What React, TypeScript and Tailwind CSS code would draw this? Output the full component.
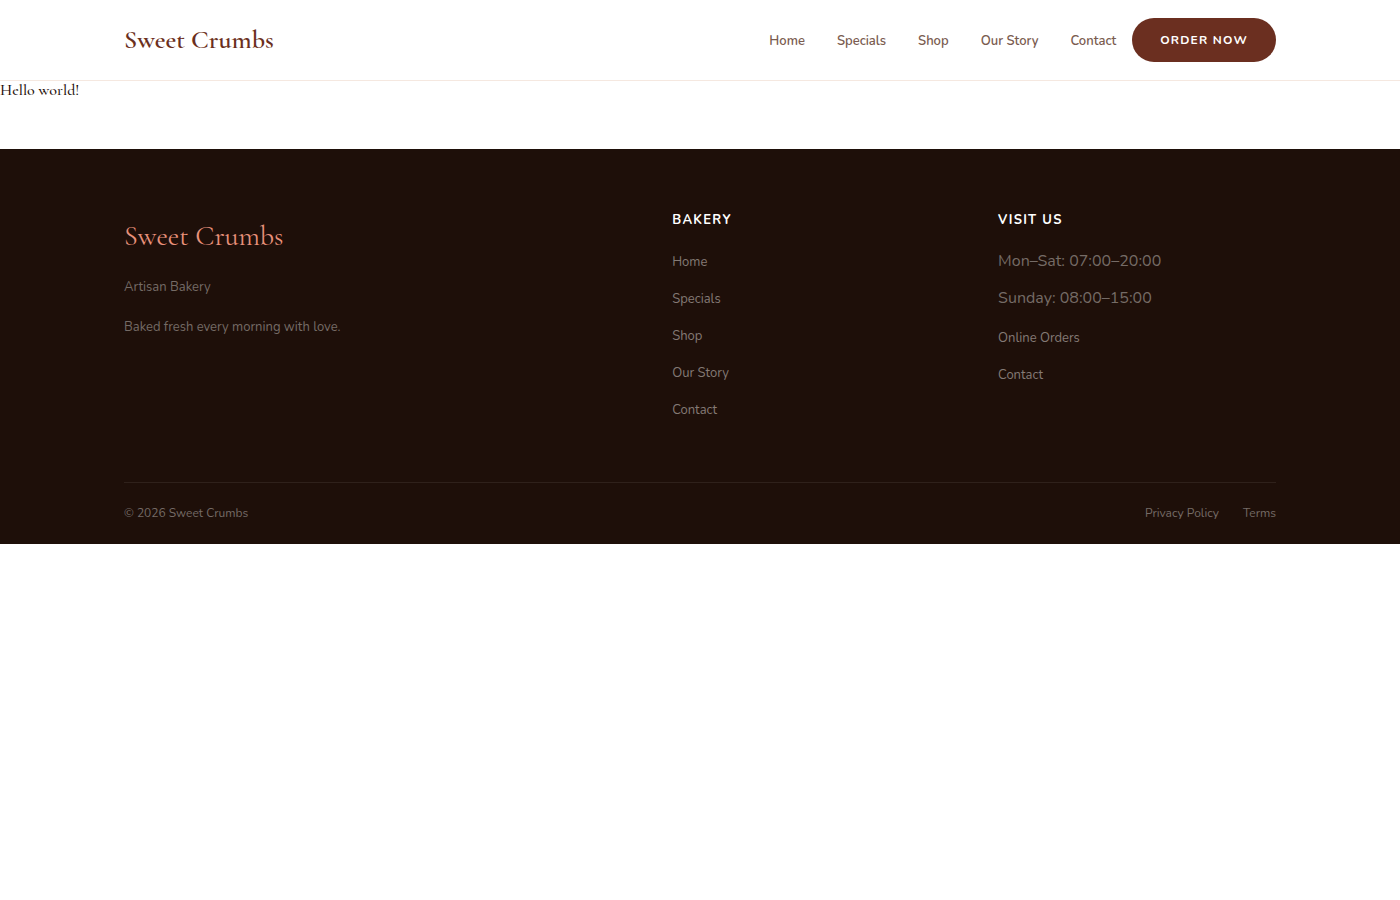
const navLinks = ['Home', 'Specials', 'Shop', 'Our Story', 'Contact'];
const hours = ['Mon–Sat: 07:00–20:00', 'Sunday: 08:00–15:00'];
const visitLinks = ['Online Orders', 'Contact'];

function FooterLinks({ links }: { links: string[] }) {
  return (
    <ul className="flex flex-col gap-3">
      {links.map((label) => (
        <li key={label} className="text-base leading-6">
          <a href="#" className="text-[13px] text-[#847a75] hover:text-white">{label}</a>
        </li>
      ))}
    </ul>
  );
}

export default function App() {
  return (
    <div className="bg-white font-['Nunito','Lato',sans-serif]">
      <header className="border-b border-[#f5e8e0]">
        <div className="mx-auto flex h-20 max-w-[1200px] items-center justify-between px-6">
          <a href="#" className="font-['Cormorant_Garamond','Liberation_Serif',serif] text-[26px] leading-10 font-semibold text-[#6b2f20]">
            Sweet Crumbs
          </a>
          <div className="flex items-center gap-4">
            <nav>
              <ul className="flex items-center gap-8">
                {navLinks.map((label) => (
                  <li key={label} className="text-base leading-6">
                    <a href="#" className="text-[13px] font-semibold text-[#7a5c50] hover:text-[#6b2f20]">
                      {label}
                    </a>
                  </li>
                ))}
              </ul>
            </nav>
            <button className="h-11 rounded-full bg-[#6b2f20] px-7 text-xs font-bold tracking-widest text-white uppercase">
              Order Now
            </button>
          </div>
        </div>
      </header>

      <main className="pb-[50px] font-['Cormorant_Garamond','Liberation_Serif',serif] text-base leading-[18px] font-medium text-[#1e0f09]">
        Hello world!
      </main>

      <footer className="bg-[#1e0f09] pt-[60px] pb-5 text-[#756b66]">
        <div className="mx-auto max-w-[1200px] px-6">
          <div className="grid grid-cols-[1.8fr_1fr_1fr] gap-12 pb-[60px]">
            <div>
              <div className="mb-3 font-['Cormorant_Garamond','Liberation_Serif',serif] text-[28px] leading-[54px] text-[#e8917a]">
                Sweet Crumbs
              </div>
              <div className="flex flex-col gap-4 text-[13px] leading-6">
                <p>Artisan Bakery</p>
                <p>Baked fresh every morning with love.</p>
              </div>
            </div>

            <div>
              <h4 className="mb-[18px] text-[13px] leading-[22px] font-bold tracking-widest text-white uppercase">Bakery</h4>
              <FooterLinks links={navLinks} />
            </div>

            <div>
              <h4 className="mb-[18px] text-[13px] leading-[22px] font-bold tracking-widest text-white uppercase">Visit Us</h4>
              <div className="flex flex-col gap-[14px]">
                <ul className="flex flex-col gap-3 text-base leading-[25px]">
                  {hours.map((line) => (
                    <li key={line}>{line}</li>
                  ))}
                </ul>
                <FooterLinks links={visitLinks} />
              </div>
            </div>
          </div>

          <div className="flex items-center justify-between border-t border-[#2f211b] pt-5 text-xs leading-[21px]">
            <span>© 2026 Sweet Crumbs</span>
            <div className="flex gap-6">
              <a href="#" className="hover:text-white">Privacy Policy</a>
              <a href="#" className="hover:text-white">Terms</a>
            </div>
          </div>
        </div>
      </footer>
    </div>
  );
}
